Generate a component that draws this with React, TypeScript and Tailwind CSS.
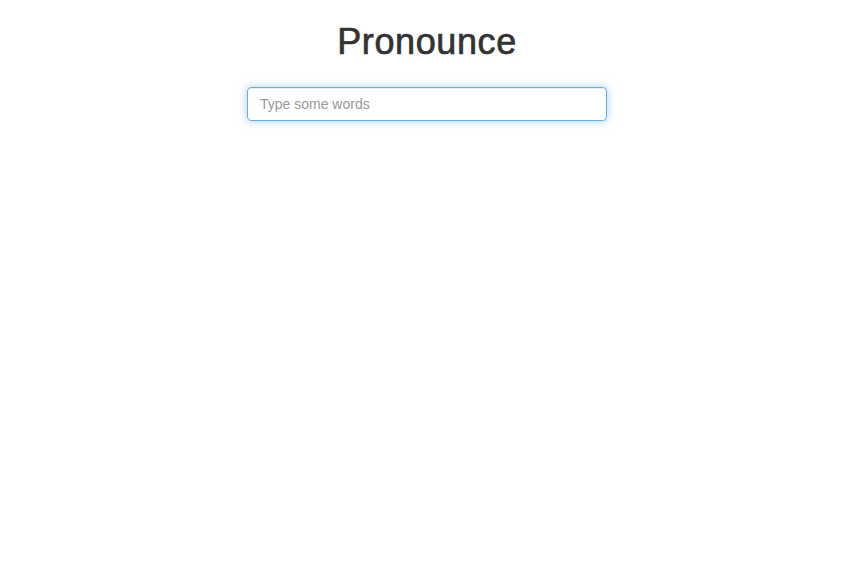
import React from "react";

function App() {
  return (
    <div className="min-h-[588px] bg-white font-['Liberation_Sans',Arial,sans-serif] text-[#333]">
      <div className="flex flex-col items-center pt-[22px] pr-[3px]">
        <h1 className="text-[36px] leading-[1.1] font-normal tracking-[0.6px] [-webkit-text-stroke:0.7px_#333]">
          Pronounce
        </h1>
        <input
          autoFocus
          type="text"
          placeholder="Type some words"
          className="mt-[25px] h-[34px] w-[360px] rounded-[4px] border border-[#66afe9] px-3 text-[14px] text-[#555] placeholder:text-[#999] outline-none shadow-[inset_0_1px_1px_rgba(0,0,0,0.075),0_0_8px_rgba(102,175,233,0.6)]"
        />
      </div>
    </div>
  );
}

export default App;
